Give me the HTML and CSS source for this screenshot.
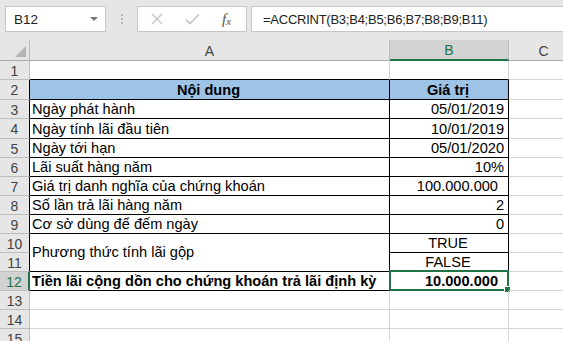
FILE: index.html
```html
<!DOCTYPE html>
<html lang="vi">
<head>
    <meta charset="UTF-8" />
    <title>ACCRINT</title>
    <link rel="stylesheet" href="styles.css">
</head>
<body>
    <div class="toolbar">
        <div class="namebox">
            <span>B12</span>
            <span class="caret"></span>
        </div>
        <div class="dots"><i></i><i></i><i></i></div>
        <div class="fxbox">
            <svg class="icon" width="12" height="12" viewBox="0 0 12 12">
                <path d="M1 1 L11 11 M11 1 L1 11" stroke="#c3c3c3" stroke-width="1.4" fill="none" />
            </svg>
            <svg class="icon" width="15" height="12" viewBox="0 0 15 12">
                <path d="M1 6.5 L5 10.5 L14 1.5" stroke="#c3c3c3" stroke-width="1.6" fill="none" />
            </svg>
            <span class="fx">f<sub>x</sub></span>
        </div>
        <div class="formula">=ACCRINT(B3;B4;B5;B6;B7;B8;B9;B11)</div>
    </div>

    <div class="sheet">
        <div class="corner"><span class="tri"></span></div>
        <div class="ch">A</div>
        <div class="ch sel">B</div>
        <div class="ch">C</div>

        <div class="rh">1</div>
        <div class="cell top"></div>
        <div class="cell top"></div>
        <div class="cell"></div>

        <div class="rh edge">2</div>
        <div class="cell tb la head center bold">Nội dung</div>
        <div class="cell tb head center bold">Giá trị</div>
        <div class="cell"></div>

        <div class="rh edge">3</div>
        <div class="cell tb la">Ngày phát hành</div>
        <div class="cell tb right">05/01/2019</div>
        <div class="cell"></div>

        <div class="rh edge">4</div>
        <div class="cell tb la">Ngày tính lãi đầu tiên</div>
        <div class="cell tb right">10/01/2019</div>
        <div class="cell"></div>

        <div class="rh edge">5</div>
        <div class="cell tb la">Ngày tới hạn</div>
        <div class="cell tb right">05/01/2020</div>
        <div class="cell"></div>

        <div class="rh edge">6</div>
        <div class="cell tb la">Lãi suất hàng năm</div>
        <div class="cell tb right">10%</div>
        <div class="cell"></div>

        <div class="rh edge">7</div>
        <div class="cell tb la">Giá trị danh nghĩa của chứng khoán</div>
        <div class="cell tb right acc">100.000.000</div>
        <div class="cell"></div>

        <div class="rh edge">8</div>
        <div class="cell tb la">Số lần trả lãi hàng năm</div>
        <div class="cell tb right">2</div>
        <div class="cell"></div>

        <div class="rh edge">9</div>
        <div class="cell tb la">Cơ sở dùng để đếm ngày</div>
        <div class="cell tb right">0</div>
        <div class="cell"></div>

        <div class="rh edge">10</div>
        <div class="cell tb la merged">Phương thức tính lãi gộp</div>
        <div class="cell tb center">TRUE</div>
        <div class="cell"></div>

        <div class="rh edge">11</div>
        <div class="cell tb center">FALSE</div>
        <div class="cell"></div>

        <div class="rh sel-row">12</div>
        <div class="cell tb la bold">Tiền lãi cộng dồn cho chứng khoán trả lãi định kỳ</div>
        <div class="cell tb right acc bold active">10.000.000<span class="handle"></span></div>
        <div class="cell"></div>

        <div class="rh">13</div>
        <div class="cell"></div>
        <div class="cell"></div>
        <div class="cell"></div>

        <div class="rh">14</div>
        <div class="cell"></div>
        <div class="cell"></div>
        <div class="cell"></div>

        <div class="rh">15</div>
        <div class="cell"></div>
        <div class="cell"></div>
        <div class="cell"></div>
    </div>
</body>
</html>
```

FILE: styles.css
```css
/* Base */
body {
    margin: 0;
    width: 563px;
    height: 341px;
    overflow: hidden;
    background: #e6e6e6;
    font-family: 'Liberation Sans', Arial, sans-serif;
    color: #000;
}

/* Formula bar */
.toolbar {
    height: 40px;
    display: flex;
    align-items: flex-start;
    padding: 6px 0 0 5px;
    box-sizing: border-box;
}

.namebox {
    width: 101px;
    height: 26px;
    box-sizing: border-box;
    background: #fff;
    border: 1px solid #c6c6c6;
    display: flex;
    align-items: center;
    justify-content: space-between;
    padding: 0 7px 0 8px;
    font-size: 13.5px;
    color: #222;
}

.caret {
    width: 0;
    height: 0;
    border-left: 4px solid transparent;
    border-right: 4px solid transparent;
    border-top: 4px solid #777;
}

.dots {
    width: 31px;
    height: 26px;
    display: flex;
    flex-direction: column;
    align-items: center;
    justify-content: center;
    gap: 2px;
}

.dots i {
    width: 2px;
    height: 2px;
    background: #b5b5b5;
}

.fxbox {
    width: 110px;
    height: 26px;
    box-sizing: border-box;
    background: #fff;
    border: 1px solid #c6c6c6;
    display: flex;
    align-items: center;
    padding-left: 13px;
    gap: 22px;
}

.fx {
    font-family: 'Liberation Serif', serif;
    font-style: italic;
    font-size: 15px;
    color: #555;
}

.fx sub {
    font-size: 11px;
    vertical-align: -1px;
}

.formula {
    flex: 1;
    height: 26px;
    margin-left: 4px;
    box-sizing: border-box;
    background: #fff;
    border: 1px solid #c6c6c6;
    border-right: none;
    padding-left: 11px;
    display: flex;
    align-items: center;
    font-size: 13px;
    letter-spacing: -0.25px;
    color: #222;
    white-space: nowrap;
}

/* Grid */
.sheet {
    display: grid;
    grid-template-columns: 30px 360px 119px 70px;
    grid-template-rows: 21px 19px 20px 19px 20px 19px 19px 19px 19px 19px 19px 19px 19px 19px 19px 19px;
    background: #fff;
}

.corner, .ch, .rh {
    background: #e6e6e6;
    color: #444;
    font-size: 14px;
    box-sizing: border-box;
    border-right: 1px solid #bcbcbc;
    border-bottom: 1px solid #bcbcbc;
    display: flex;
    align-items: center;
    justify-content: center;
}

.corner {
    position: relative;
    border-bottom-color: #ababab;
}

.tri {
    position: absolute;
    right: 3px;
    bottom: 3px;
    width: 0;
    height: 0;
    border-left: 11px solid transparent;
    border-bottom: 11px solid #b4b4b4;
}

.ch {
    border-bottom-color: #ababab;
    padding-top: 1px;
}

.ch.sel {
    background: #d2d2d2;
    color: #217346;
    border-bottom: 2px solid #217346;
}

.rh {
    padding-top: 1px;
}

.rh.edge {
    border-right-color: #000;
}

.rh.sel-row {
    background: #d2d2d2;
    color: #217346;
    border-right: 2px solid #217346;
}

.cell {
    box-sizing: border-box;
    border-right: 1px solid #d4d4d4;
    border-bottom: 1px solid #d4d4d4;
    font-size: 14.6px;
    line-height: 1;
    white-space: nowrap;
    display: flex;
    align-items: flex-end;
    padding: 0 4px 1px 2px;
    position: relative;
}

.cell.top {
    border-bottom-color: #000;
}

.cell.tb {
    border-right-color: #000;
    border-bottom-color: #000;
}

.head {
    background: #9dc3e6;
}

.center {
    justify-content: center;
}

.right {
    justify-content: flex-end;
}

.acc {
    padding-right: 10px;
}

.bold {
    font-weight: bold;
}

.merged {
    grid-row: span 2;
    align-items: center;
    padding-bottom: 0;
}

/* Active cell */
.active::before {
    content: "";
    position: absolute;
    top: -2px;
    left: -1px;
    right: -1px;
    bottom: -1px;
    border: 2px solid #217346;
}

.handle {
    position: absolute;
    right: -3px;
    bottom: -3px;
    width: 5px;
    height: 5px;
    background: #217346;
    border: 1px solid #fff;
}
```
